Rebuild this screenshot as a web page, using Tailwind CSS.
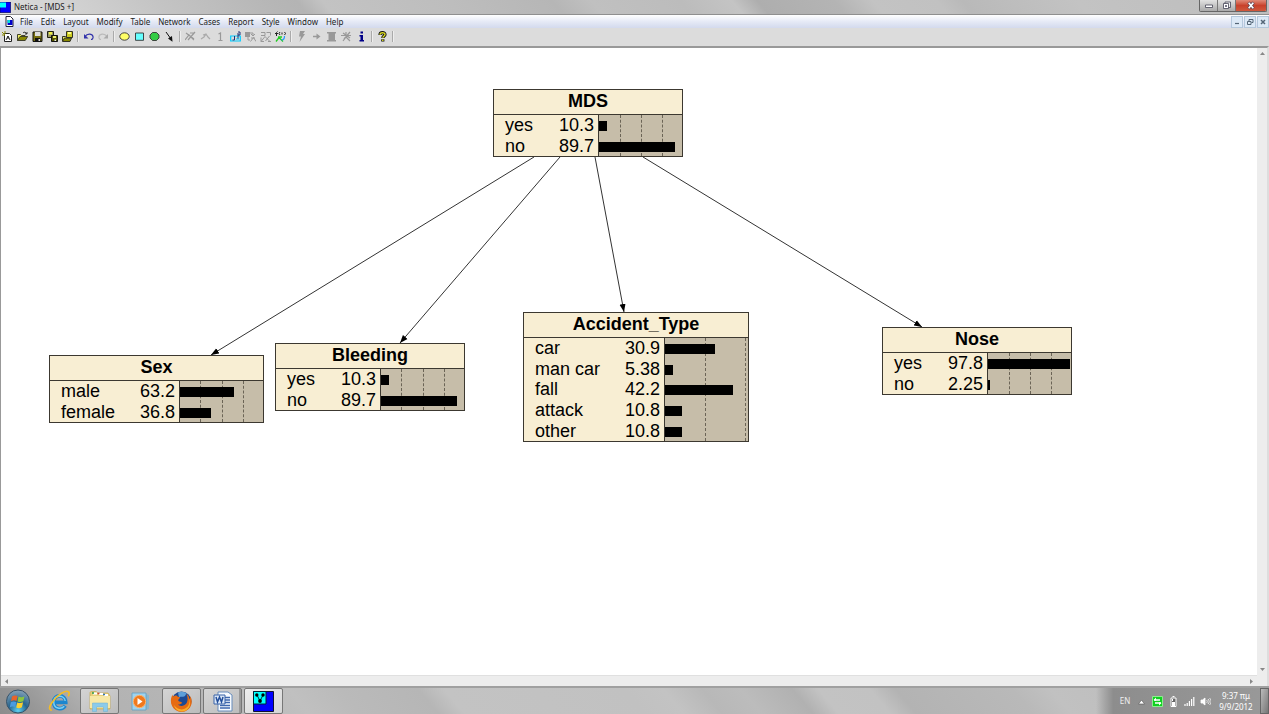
<!DOCTYPE html>
<html lang="en">
<head>
<meta charset="utf-8">
<title>Netica - [MDS +]</title>
<script src="https://cdn.jsdelivr.net/npm/@tailwindcss/browser@4"></script>
</head>
<body class="flex h-screen flex-col overflow-hidden bg-[#dcdcdc] font-['Noto_Sans',sans-serif] text-[8px] text-[#222]">

<header class="flex h-[15px] shrink-0 items-start border-b border-[#8f8f8f] bg-[linear-gradient(50deg,#dcdcdc_0%,#d2d2d2_6%,#c4c4c4_13%,#b6b6b6_22%,#b4b4b4_24%,#c3c3c3_26%,#bdbdbd_36%,#b6b6b6_44%,#c0c0c0_47%,#bcbcbc_54%,#c4c4c4_58%,#aeaeae_60%,#b4b4b4_66%,#c3c3c3_69%,#c1c1c1_74%,#b9b9b9_76%,#c3c3c3_85%,#bdbdbd_100%)]">
  <svg class="mt-[2px] size-[11px] shrink-0" viewBox="0 0 11 11"><path fill="#00f" stroke="#002" stroke-width=".6" d="M0 0h10.700v10.700H0z"/><path fill="#0ff" d="M0 .5h6v5H0z"/></svg>
  <h1 class="ml-[3px] flex-1 pt-[2px] leading-[10px]">Netica - [MDS +]</h1>
  <div class="mr-[2px] flex h-[12px] overflow-hidden rounded-b-[2px] border border-t-0 border-[#666]">
    <button aria-label="Minimize" class="flex w-[18px] items-center justify-center border-r border-[#777] bg-linear-to-b from-[#e2e2e2] to-[#aaa]"><svg class="h-[9px] w-[10px]" viewBox="0 0 10 9"><path fill="#fff" stroke="#445" stroke-width=".8" d="M1.500 4h7v2.500h-7z"/></svg></button>
    <button aria-label="Restore" class="flex w-[18px] items-center justify-center border-r border-[#777] bg-linear-to-b from-[#e2e2e2] to-[#aaa]"><svg class="h-[9px] w-[10px]" viewBox="0 0 10 9"><path fill="#eee" stroke="#445" stroke-width=".8" d="M3 1h5.500v5.500H3z"/><path fill="#fff" stroke="#445" stroke-width=".8" d="M1.500 2.500h5v5h-5z"/><path fill="#778" d="M3 4h2v2H3z"/></svg></button>
    <button aria-label="Close" class="flex w-[30px] items-center justify-center bg-linear-to-b from-[#e08a78] via-[#c8412b] to-[#d0583c]"><svg class="h-[9px] w-[10px]" viewBox="0 0 10 9"><path stroke="#545" stroke-width="3" d="m2.500 1.500 5 6m0-6-5 6"/><path stroke="#fff" stroke-width="1.700" d="m2.700 1.700 4.600 5.600m0-5.600-4.600 5.600"/></svg></button>
  </div>
</header>

<nav aria-label="Menu" class="flex h-[13px] shrink-0 items-center bg-linear-to-b from-white via-[#e6eaf6] to-[#d3daed]">
  <svg class="ml-[5px] mr-[6px] h-[11px] w-[9px] shrink-0" viewBox="0 0 9 11"><path fill="#fff" stroke="#223" d="M1 .5h4.500L8 3v7.500H1z"/><path fill="#00c" d="M2.500 4h5v5h-5z"/><path fill="#0dd" d="M2.500 4H5v3H2.500z"/></svg>
  <div class="flex flex-1 items-center gap-2">
    <button>File</button><button>Edit</button><button>Layout</button><button>Modify</button><button>Table</button><button>Network</button><button>Cases</button><button>Report</button><button>Style</button><button>Window</button><button>Help</button>
  </div>
  <div class="flex gap-px">
    <button aria-label="Minimize document" class="flex h-[12px] w-[12px] items-center justify-center border border-[#b4c8dc] bg-[#dce9f6]"><svg class="size-[8px]" viewBox="0 0 8 8"><path stroke="#567" stroke-width="1.200" d="M2 5.500h4"/></svg></button>
    <button aria-label="Restore document" class="flex h-[12px] w-[12px] items-center justify-center border border-[#b4c8dc] bg-[#dce9f6]"><svg class="size-[8px]" viewBox="0 0 8 8" fill="none" stroke="#567"><path d="M3 3V1.500h4V4.500H5.500M1.500 3.500h3.500v3H1.500z"/></svg></button>
    <button aria-label="Close document" class="flex h-[12px] w-[12px] items-center justify-center border border-[#b4c8dc] bg-[#dce9f6]"><svg class="size-[8px]" viewBox="0 0 8 8"><path stroke="#567" stroke-width="1.500" d="m2 2 4 4m0-4L2 6"/></svg></button>
  </div>
</nav>

<div role="toolbar" aria-label="Tools" class="flex h-[18px] shrink-0 items-center bg-[#dcdcdc] pb-[2px] [&>button]:flex [&>button]:w-[15px] [&>button]:shrink-0 [&>button]:justify-center [&_svg]:size-[11px] [&>i]:mx-[2px] [&>i]:h-[11px] [&>i]:w-[2px] [&>i]:border-l [&>i]:border-r [&>i]:border-l-[#aaa] [&>i]:border-r-[#eee]">
  <button aria-label="New"><svg viewBox="0 0 11 11"><path fill="#fff" stroke="#222" d="M2.500 2.500h5l2 2v6h-7z"/><path stroke="#880" d="M0 1l3 3M3 0v3M0 4h3"/><path fill="none" stroke="#222" d="M4 9l2-4 2 4M6 5v3"/></svg></button>
  <button aria-label="Open"><svg viewBox="0 0 11 11"><path fill="#ee6" stroke="#332" stroke-width=".9" d="M.5 9.500v-6h3l1 1h3.500v2"/><path fill="#880" stroke="#332" stroke-width=".9" d="m.5 9.500 2.500-4h7.700l-2.500 4z"/><path fill="none" stroke="#222" stroke-width=".9" d="M6 2c1-1.500 3-1 3.500 1M8 3h2V1"/></svg></button>
  <button aria-label="Save"><svg viewBox="0 0 11 11"><path fill="#776f10" stroke="#111" d="M1 1h9v9.500H1z"/><path fill="#ddd" d="M3 1h5.500v4H3z"/><path fill="#111" d="M3 7h5.500v3.500H3z"/><path fill="#ddd" d="M6.500 8H8v2H6.500z"/></svg></button>
  <button aria-label="Save as"><svg viewBox="0 0 11 11"><path fill="#996" stroke="#221" d="M.5.500h6v6h-6z"/><path fill="#ee4" d="M2 1h3v2.500H2z"/><path fill="#550" stroke="#111" d="M4.500 4.500h6v6h-6z"/><path fill="#ee7" d="M6 5h3v2H6z"/><path fill="#eee" d="M7.500 8.500H9V10H7.500z"/></svg></button>
  <button aria-label="Open case"><svg viewBox="0 0 11 11"><path fill="#cc2" stroke="#332" d="M4.500.5h6v6h-6z"/><path fill="#ff8" d="M6 1h3v2H6z"/><path fill="#ee6" stroke="#332" d="M.5 10V5.500h3l1 1h3"/><path fill="#880" stroke="#332" d="m.5 10.500 2-3.500h7l-1.500 3.500z"/></svg></button>
  <i></i>
  <button aria-label="Undo"><svg viewBox="0 0 11 11"><path fill="none" stroke="#33a" stroke-width="1.200" d="M2 5.500c2-3 7-3.500 8 0 .5 2-1 3-2 3"/><path fill="#33a" d="M1 3v4.500h4.500z"/></svg></button>
  <button aria-label="Redo"><svg viewBox="0 0 11 11"><path fill="none" stroke="#bbb" stroke-width="1.200" d="M9 5.500c-2-3-7-3.500-8 0-.5 2 1 3 2 3"/><path fill="#aaa" d="M10 3v4.500H5.500z"/></svg></button>
  <i></i>
  <button aria-label="Nature node"><svg viewBox="0 0 11 11"><ellipse cx="5.500" cy="5.500" rx="4.700" ry="3.700" fill="#ff6" stroke="#333" stroke-width=".9"/></svg></button>
  <button aria-label="Decision node"><svg viewBox="0 0 11 11"><path fill="#6ff" stroke="#333" stroke-width=".9" d="M1.500 2h8v7.300h-8z"/></svg></button>
  <button aria-label="Utility node"><svg viewBox="0 0 11 11"><path fill="#3c4" stroke="#333" stroke-width=".9" d="M3.500 1.500h4l2.500 2.500v3L7.500 9.500h-4L1 7V4z"/></svg></button>
  <button aria-label="Link"><svg viewBox="0 0 11 11"><path stroke="#111" d="m2 1 5 7"/><path fill="#111" d="M8.500 10.800 4 7.500 8 5z"/></svg></button>
  <i></i>
  <button aria-label="Cut links"><svg viewBox="0 0 11 11" fill="none" stroke="#999" stroke-width="1.200"><path d="M0 9l4-5 5 5M1 2l8 6M10 1 3 9M5 2h5"/></svg></button>
  <button aria-label="Reverse link"><svg viewBox="0 0 11 11" fill="none" stroke="#aaa" stroke-width="1.200"><path d="m1 8 3-2 2-3 2 3 2 2M3 4l3-1"/></svg></button>
  <button aria-label="One"><svg viewBox="0 0 11 11" fill="none" stroke="#999" stroke-width="1.200"><path d="M3.500 3 5.500 2v7.500M3.500 9.500h4"/></svg></button>
  <button aria-label="Edit table"><svg viewBox="0 0 11 11" fill="none"><path stroke="#0cf" stroke-width="1.200" d="M.7 5h9.600v5H.7z"/><path stroke="#237" d="M4.500 5v4H2.500M8 2v6M8 1h2v3H8"/><path stroke="#0cf" d="M6 8h3"/></svg></button>
  <button aria-label="Absorb"><svg viewBox="0 0 11 11"><path fill="#999" d="M0 1h5v5H0z"/><path fill="none" stroke="#999" d="M5 2h3v3M6 3l2 2 2-2M3 6v3h2M5.500 10.500l3-4 2.500 4M6 7h4"/></svg></button>
  <button aria-label="Expand"><svg viewBox="0 0 11 11" fill="none" stroke="#999"><path d="M1 1.500h4v3H1M6.500 1.500h4v3M1 10.500l4-5 5 5M5.500 10l4-5M1 6.500v4h3M8 10.500h3"/></svg></button>
  <button aria-label="Equation"><svg viewBox="0 0 11 11" fill="none"><path stroke="#222" d="M1.500 5V1.500l1-1M0 2.500h3M5 1 4 2.500 5 4M7 1.500v2M9.500 1l1 1.500-1 1.500"/><path stroke="#2c2" stroke-width="1.300" d="m1 10.500 3-4 4 4M3 6h4"/><path stroke="#29f" stroke-width="1.200" d="M9.500 5c0 3-1 4-3 4"/></svg></button>
  <i></i>
  <button aria-label="Compile"><svg viewBox="0 0 11 11"><path fill="#999" d="M4 0h5L7 3h2L3.500 11 5 5.500H3z"/></svg></button>
  <button aria-label="Step"><svg viewBox="0 0 11 11"><path stroke="#999" stroke-width="1.500" d="M2 5.500h5"/><path fill="#999" d="m5.500 2.500 4 3-4 3z"/></svg></button>
  <button aria-label="Optimize"><svg viewBox="0 0 11 11"><path fill="#999" d="M1 1h9v1.500H9V9h1v1.500H1V9h1.500V2.500H1z"/></svg></button>
  <button aria-label="Remove findings"><svg viewBox="0 0 11 11" fill="none" stroke="#999" stroke-width="1.200"><path d="M0 4.500h10M2 10l3-4 4 4M5 1v5M3 8l6-7M2 2l7 5"/></svg></button>
  <button aria-label="Information"><svg viewBox="0 0 11 11"><path fill="#008" d="M4.500.5H7v2H4.500zM3.500 4H7v5h1v1.500H3.500V9h1V5.500h-1z"/></svg></button>
  <i></i>
  <button aria-label="Help"><svg viewBox="0 0 11 11" fill="none"><path stroke="#111" stroke-width="3.200" d="M3 4c0-3 5-3 5-.5 0 1.500-2.200 1.500-2.200 3.500M5.800 8.300v2.200"/><path stroke="#dd2" stroke-width="1.400" d="M3 3.800c0-2.600 5-2.600 5-.3 0 1.500-2.200 1.500-2.200 3.300M5.800 8.500V10"/></svg></button>
  <i></i>
</div>

<div class="grid min-h-0 flex-1 grid-cols-[minmax(0,1fr)_10px] grid-rows-[minmax(0,1fr)_11px] border-l border-t-2 border-[#999] border-r-2 border-r-[#ddd]">
  <main class="relative overflow-hidden bg-white font-['Liberation_Sans',Arial,sans-serif] text-[18px] leading-5 text-black">
    <svg class="absolute inset-0 size-full" aria-label="Links from MDS">
      <defs><marker id="tip" markerWidth="9" markerHeight="7" refX="8" refY="3.500" orient="auto" markerUnits="userSpaceOnUse"><path d="M0 0.500 8 3.500 0 6.500z"/></marker></defs>
      <g transform="translate(-1 -48)" stroke="#333" stroke-width="1">
        <path marker-end="url(#tip)" d="M534 157 211 355"/><path marker-end="url(#tip)" d="M560 157 400 343"/><path marker-end="url(#tip)" d="M595 157 624 312"/><path marker-end="url(#tip)" d="M643 157 922 327"/>
      </g>
    </svg>
    <div id="nodes"></div>
  </main>
  <div class="flex flex-col items-center justify-between bg-[#ededed] py-[2px]">
    <button aria-label="Scroll up"><svg class="size-[7px]" viewBox="0 0 7 7"><path fill="#888" d="M1 5h5L3.500 2z"/></svg></button>
    <button aria-label="Scroll down"><svg class="size-[7px]" viewBox="0 0 7 7"><path fill="#888" d="M1 2h5L3.500 5z"/></svg></button>
  </div>
  <div class="flex items-center justify-between border-t border-[#e0e0e0] bg-[#ededed] px-[2px]">
    <button aria-label="Scroll left"><svg class="size-[7px]" viewBox="0 0 7 7"><path fill="#888" d="M5 1v5L2 3.500z"/></svg></button>
    <button aria-label="Scroll right"><svg class="size-[7px]" viewBox="0 0 7 7"><path fill="#888" d="M2 1v5l3-2.500z"/></svg></button>
  </div>
  <div class="bg-[#ededed]"></div>
</div>

<footer class="flex h-[28px] shrink-0 items-stretch border-t-2 border-[#a0a0a0] bg-[linear-gradient(50deg,#8c8c8c_0%,#979797_3%,#b2b2b2_8%,#b6b6b6_16%,#c0c0c0_24%,#bababa_28%,#b6b6b6_34%,#c3c3c3_36%,#c1c1c1_50%,#c3c3c3_53%,#b8b8b8_56%,#bcbcbc_59%,#b1b1b1_63%,#c3c3c3_65%,#c2c2c2_69%,#b3b3b3_71%,#b9b9b9_80%,#c1c1c1_83%,#b8b8b8_100%)]">
  <div class="flex flex-1 items-stretch gap-[2px] [&>button]:flex [&>button]:items-center [&>button]:justify-center">
    <button aria-label="Start" class="w-[37px]"><svg class="size-[25px]" viewBox="0 0 25 25"><defs><radialGradient id="orb" cx=".5" cy=".9" r=".9"><stop offset="0" stop-color="#5fd0f0"/><stop offset=".45" stop-color="#26658f"/><stop offset="1" stop-color="#8aa4b8"/></radialGradient></defs><circle cx="12" cy="12.500" r="11.500" fill="url(#orb)" stroke="#375268"/><path fill="#e8642a" d="M6 7.500c2-1.500 4-1.300 5.500-.5l-1 5c-2-1-3.500-.8-5.500.3z"/><path fill="#8cc63e" d="M12.500 7.500c2 1 4 1 6-.2l-1.200 5c-2 1-3.800 1-5.800.2z"/><path fill="#4a9be0" d="M4.800 13.300c2-1 3.500-1.200 5.500-.2l-1.100 5c-2-1-3.500-1-5.500.3z"/><path fill="#fbd02e" d="M11.300 13.500c2 .8 3.800.8 5.800-.2l-1.200 5c-2 1.200-3.800 1.200-5.700.2z"/></svg></button>
    <button aria-label="Internet Explorer" class="w-[39px]"><svg class="size-[22px]" viewBox="0 0 23 23" fill="none"><path stroke="#1c86cf" stroke-width="4" d="M18 16.500c-3 4.500-12 4-12-4 0-8.500 12.500-8.500 12.500.5H7"/><path stroke="#7cd0f5" stroke-width="1.500" d="M17 17c-3 3.500-11 3-11-4.500C6 5 17 4.500 18 11.500"/><path stroke="#f4bc26" stroke-width="1.800" d="M4 21c-3 0-3.500-3.500 1-9C10 5 19-.5 21.500 2c1 1 .5 3-.5 4.500"/></svg></button>
    <button aria-label="File Explorer" class="w-[39px] rounded-[2px] border border-[#777] bg-linear-to-br from-[#d4d4d4] to-[#bcbcbc]"><svg class="h-[22px] w-[24px]" viewBox="0 0 24 22"><path fill="#e7cf79" stroke="#c5a94e" stroke-width=".7" d="M2 3c0-1 .5-1.500 1.500-1.500H8l2 1.500h10l2 3v13H2z"/><path fill="#fff" d="M5 2.500h4v2H5zM11 3h4v2h-4zM16 4h4v2h-4z"/><path stroke="#2a9b47" stroke-width="1.500" d="M4 3h2"/><path stroke="#c43" stroke-width="1.500" d="M9.500 3.500h2"/><path stroke="#37b" stroke-width="1.500" d="M15 4.500h2"/><path fill="#f7e8a6" d="M2 6h20v12H2z"/><path fill="#8ccbea" stroke="#6aaed3" stroke-width=".5" d="M4.500 21.500V13h15v8.500h-4V17h-7v4.500z"/></svg></button>
    <button aria-label="Media Player" class="w-[39px]"><svg class="h-[19px] w-[20px]" viewBox="0 0 20 19"><path fill="#8bb6cc" d="M14 2l4 1v14l-4 1z"/><path fill="#9fd3ee" stroke="#639fc0" stroke-width=".8" d="M1 1h14v17H1z"/><circle cx="8.500" cy="9.500" r="6.200" fill="#f0791d" stroke="#fbb36f"/><path fill="#fff" d="M6.500 6v7l5-3.500z"/></svg></button>
    <button aria-label="Firefox" class="w-[39px] rounded-[2px] border border-[#777] bg-linear-to-br from-[#d4d4d4] to-[#bcbcbc]"><svg class="size-[23px]" viewBox="0 0 23 23"><circle cx="11.500" cy="11.500" r="10" fill="#1d4a94"/><path fill="#5d9fd9" d="M8 2.500c3-1.500 7-.8 9 1.500-2 0-1 2-3 2.500-2 1-4-.5-5 1z"/><path fill="#e66b12" d="M2.500 4.500c-3 6-1.700 12 3 15.500 6 4 14 1.500 16-6 .6-3 0-6-1.500-8 .4 2-.2 3-.4 3.500C19 6 18 5 16.500 4c1.500 3 1.500 7-.2 9.500-2.500 3.500-7.300 2.500-8.300 1 2 .2 3-1 4.300-1.600-.5-1.200-3-1-4-2.200C8 9.500 9.500 8.500 10 7.500 8.500 7 7.500 6.500 6.500 5.500 5 5.500 4 6 3.500 6.500c-.7-.5-1-1-1-2z"/><path fill="#f9ae28" d="M19 8c1.500 5-.5 9.500-5 11-3.500 1.200-8-.5-10-4 1 4.500 4.500 6.500 8.500 6.500 6-.5 9.500-6.500 6.500-13.500z"/></svg></button>
    <button aria-label="Word" class="w-[39px] rounded-[2px] border border-[#777] bg-linear-to-br from-[#d4d4d4] to-[#bcbcbc] shadow-[inset_-3px_0_0_-1px_#999]"><svg class="h-[21px] w-[20px]" viewBox="0 0 20 21"><path fill="#f7fbff" stroke="#668bbb" d="M5 1h10l4 3v16H5z"/><path stroke="#3f68ae" stroke-width="1.300" d="M12 6.500h5M12 9h5M12 11.500h5M7 14.500h10M7 17h10"/><path fill="#dce8f7" stroke="#3863a8" d="M1 4h11v9H1z"/><path fill="none" stroke="#234f9c" stroke-width="1.500" d="m3 6 1.500 5L6.500 6l2 5L10 6"/></svg></button>
    <button aria-label="Netica" class="w-[39px] rounded-[2px] border border-[#777] bg-linear-to-br from-[#ededed] to-[#d6d6d6]"><svg class="size-[21px]" viewBox="0 0 21 21"><path fill="#00f" stroke="#113" d="M.5.5h20v20H.5z"/><path fill="#0ff" stroke="#023" d="M.5.500H13V13H.5z"/><path fill="none" stroke="#000" stroke-width=".8" d="m4 4 3 6 3-6"/><circle cx="3.800" cy="4" r="1.700"/><circle cx="10" cy="4" r="1.700"/><circle cx="7" cy="10" r="1.900"/></svg></button>
  </div>
  <div class="flex items-center bg-linear-to-r from-transparent via-[#8d8d8d] via-10% to-[#999] pl-[20px] text-white">
    <button class="w-[18px] text-[#eee]">EN</button>
    <button aria-label="Show hidden icons" class="mx-[3px]"><svg class="size-[9px]" viewBox="0 0 9 9"><path fill="#fff" stroke="#555" stroke-width=".6" d="M1.500 7h6l-3-4z"/></svg></button>
    <svg class="mx-[3px] size-[11px]" viewBox="0 0 11 11"><path fill="#10d020" stroke="#9f9" stroke-width=".8" d="M.5.500h10v10H.5z"/><path stroke="#fff" stroke-width="1.300" d="M2 4h6M3 7h6"/><path fill="#fff" d="M4 1.500V5L1.500 4zM7 6v3.500L9.500 7z"/></svg>
    <svg class="mx-[3px] h-[11px] w-[9px]" viewBox="0 0 9 11"><path fill="#666" stroke="#fff" d="M2 2h5v8.500H2zM3.500.5h2"/><path fill="#fff" d="M3 6h3v4H3zM3 3h1v2H3z"/></svg>
    <svg class="mx-[3px] h-[11px] w-[11px]" viewBox="0 0 11 11" stroke="#fff" stroke-width="1.200"><path d="M1 10V8M3.200 10V7M5.400 10V5M7.600 10V3M9.800 10V1"/></svg>
    <svg class="mx-[2px] h-[11px] w-[11px]" viewBox="0 0 11 11" fill="none" stroke="#fff" stroke-width=".8"><path fill="#fff" d="M1 4h1.500L5 2v7L2.500 7H1z"/><path d="M6.500 4c1 1 1 2 0 3M8 3c1.500 1.500 1.500 3.500 0 5M9.500 2c2 2 2 5 0 7"/></svg>
    <time datetime="2012-09-09T09:37" class="ml-[4px] mr-[5px] w-[38px] text-center leading-[11px]">9:37 πμ<br>9/9/2012</time>
    <button aria-label="Show desktop" class="h-full w-[9px] border border-[#666] bg-linear-to-br from-[#bbb] to-[#777]"></button>
  </div>
</footer>

<script>
// Belief nodes: position on the canvas, size, gridline offsets, and rows of [state, belief, bar width].
const nodes = [
  { name: 'MDS', x: 492, y: 41, w: 190, h: 68, ticks: [21, 42, 63], rows: [['yes', '10.3', 8], ['no', '89.7', 76]] },
  { name: 'Sex', x: 48, y: 307, w: 215, h: 68, ticks: [20, 42, 63], rows: [['male', '63.2', 54], ['female', '36.8', 31]] },
  { name: 'Bleeding', x: 274, y: 295, w: 190, h: 68, ticks: [20, 42, 63], rows: [['yes', '10.3', 8], ['no', '89.7', 76]] },
  { name: 'Accident_Type', x: 522, y: 264, w: 226, h: 130, ticks: [40, 80], rows: [['car', '30.9', 50], ['man car', '5.38', 8], ['fall', '42.2', 68], ['attack', '10.8', 17], ['other', '10.8', 17]] },
  { name: 'Nose', x: 881, y: 279, w: 190, h: 68, ticks: [21, 42, 63], rows: [['yes', '97.8', 82], ['no', '2.25', 2]] },
];
document.getElementById('nodes').innerHTML = nodes.map(n => `
  <section class="absolute flex flex-col border border-[#3c3830] bg-[#f8eed3]" style="left:${n.x}px;top:${n.y}px;width:${n.w}px;height:${n.h}px">
    <h2 class="h-[25px] shrink-0 border-b border-[#3c3830] text-center leading-[23px] font-bold">${n.name}</h2>
    <div class="relative min-h-0 flex-1">
      <div class="absolute inset-y-0 right-0 w-[84px] border-l border-[#3c3830] bg-[#c6bda9]">
        ${n.ticks.map(t => `<span class="absolute inset-y-0 border-l border-dashed border-[#6b6456]" style="left:${t}px"></span>`).join('')}
      </div>
      <table class="relative h-full w-full border-collapse"><tbody>
        ${n.rows.map(r => `<tr><th scope="row" class="p-0 pl-[11px] text-left font-normal">${r[0]}</th><td class="p-0 pr-[5px] text-right">${r[1]}</td><td class="w-[83px] p-0"><div class="mt-[2px] h-[10px] bg-black" style="width:${r[2]}px"></div></td></tr>`).join('')}
      </tbody></table>
    </div>
  </section>`).join('');
</script>
</body>
</html>
